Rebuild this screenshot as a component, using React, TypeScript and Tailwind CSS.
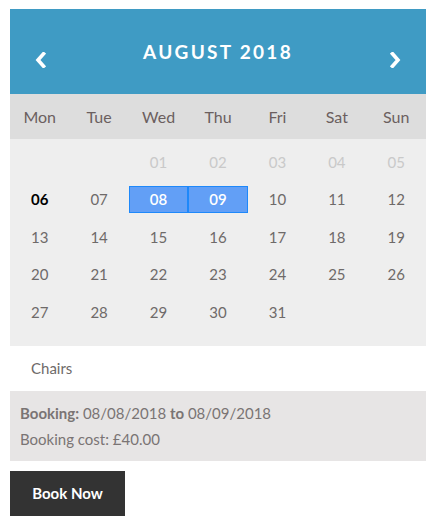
const FONT = "font-['Lato','Open_Sans',sans-serif]"

const WEEKDAYS = ['Mon', 'Tue', 'Wed', 'Thu', 'Fri', 'Sat', 'Sun']

type Cell = { label: string; kind: 'empty' | 'past' | 'today' | 'selected' | 'normal' }

function buildWeeks(): Cell[][] {
  const cells: Cell[] = [
    { label: '', kind: 'empty' },
    { label: '', kind: 'empty' },
  ]
  for (let d = 1; d <= 31; d++) {
    const label = d < 10 ? `0${d}` : `${d}`
    let kind: Cell['kind'] = 'normal'
    if (d <= 5) kind = 'past'
    else if (d === 6) kind = 'today'
    else if (d === 8 || d === 9) kind = 'selected'
    cells.push({ label, kind })
  }
  while (cells.length % 7) cells.push({ label: '', kind: 'empty' })
  const weeks: Cell[][] = []
  for (let i = 0; i < cells.length; i += 7) weeks.push(cells.slice(i, i + 7))
  return weeks
}

function Chevron({ dir }: { dir: 'left' | 'right' }) {
  return (
    <svg width="11" height="16" viewBox="0 0 11 16" className="block">
      <polyline
        points={dir === 'left' ? '8.5,1.8 3,8 8.5,14.2' : '2.5,1.8 8,8 2.5,14.2'}
        fill="none"
        stroke="white"
        strokeWidth="3.6"
        strokeLinecap="square"
      />
    </svg>
  )
}

function DayCell({ cell }: { cell: Cell }) {
  if (cell.kind === 'selected') {
    return (
      <div className="flex h-[37.5px] items-center justify-center">
        <div className="flex h-[27px] w-full items-center justify-center border border-[#1e88fa] bg-[#629ff6] text-[15px] font-semibold text-white">
          {cell.label}
        </div>
      </div>
    )
  }
  return (
    <div
      className={`flex h-[37.5px] items-center justify-center text-[15px] ${
        cell.kind === 'past'
          ? 'text-[#c9c9c9]'
          : cell.kind === 'today'
            ? 'font-bold text-black'
            : 'text-[#6e6a69]'
      }`}
    >
      {cell.label}
    </div>
  )
}

export default function App() {
  const weeks = buildWeeks()

  return (
    <div className={`${FONT} bg-white px-[10px] pt-[9px]`}>
      <div className="w-[416px]">
        <div className="flex h-[85px] items-start justify-between bg-[#3f9bc4] px-[25px] text-white">
          <button type="button" className="mt-[43px]">
            <Chevron dir="left" />
          </button>
          <h2 className="mt-[29px] text-[19px] font-bold tracking-[0.12em]">AUGUST 2018</h2>
          <button type="button" className="mt-[43px]">
            <Chevron dir="right" />
          </button>
        </div>

        <div className="grid h-[45px] grid-cols-7 items-center bg-[#dddddd] text-[16px] text-[#6b5f5f]">
          {WEEKDAYS.map((d) => (
            <div key={d} className="text-center">
              {d}
            </div>
          ))}
        </div>

        <div className="bg-[#eeeeee] pb-[15.5px] pt-[4px]">
          {weeks.map((week, i) => (
            <div key={i} className="grid grid-cols-7">
              {week.map((cell, j) => (
                <DayCell key={j} cell={cell} />
              ))}
            </div>
          ))}
        </div>

        <div className="flex h-[45px] items-center px-[21px] text-[15px] text-[#6e6a69]">Chairs</div>

        <div className="bg-[#e7e5e5] px-[10px] py-[9px] text-[15px] leading-[26px] text-[#7a7474]">
          <p>
            <strong className="font-bold">Booking:</strong> 08/08/2018 <strong className="font-bold">to</strong>{' '}
            08/09/2018
          </p>
          <p>Booking cost: £40.00</p>
        </div>

        <button
          type="button"
          className="mt-[10px] h-[45px] w-[115px] bg-[#333333] text-[15px] font-bold text-white"
        >
          Book Now
        </button>
      </div>
    </div>
  )
}
